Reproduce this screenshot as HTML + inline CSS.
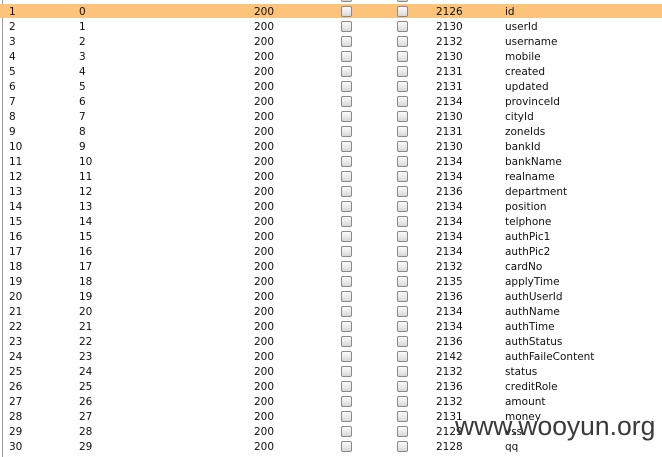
<!DOCTYPE html>
<html><head><meta charset="utf-8"><style>
html,body{margin:0;padding:0;background:#fff;width:662px;height:457px;overflow:hidden;position:relative;font-family:"DejaVu Sans","Liberation Sans",sans-serif;font-size:10.5px;color:#111}
.b{position:absolute;left:2px;top:0;width:1px;height:457px;background:#9a9a9a}
.r{position:absolute;left:0;width:662px;height:15px;line-height:15px}
.r.s{background:#fbc47a;height:14px;top:4px}
.r span{position:absolute;top:1px}
.cb{position:absolute;top:2px;width:9px;height:9px;border:1px solid #8a8a8a;border-radius:2px;background:linear-gradient(#fbfbfb,#d8d8d8)}
.wm{position:absolute;left:455px;top:411px;font-family:"Liberation Sans",sans-serif;font-size:26.5px;color:#3a3a3a;white-space:nowrap}
</style></head><body>
<div class="b"></div>
<div id="t"></div>
<script>
var n=["id","userId","username","mobile","created","updated","provinceId","cityId","zoneIds","bankId","bankName","realname","department","position","telphone","authPic1","authPic2","cardNo","applyTime","authUserId","authName","authTime","authStatus","authFaileContent","status","creditRole","amount","money","vss","qq"];
var c=[2126,2130,2132,2130,2131,2131,2134,2130,2131,2130,2134,2134,2136,2134,2134,2134,2134,2132,2135,2136,2134,2134,2136,2142,2132,2136,2132,2131,2129,2128];
var h='<div class="r" style="top:-11px"><div class="cb" style="left:341px"></div><div class="cb" style="left:397px"></div></div>';
for(var i=0;i<30;i++){var y=4+i*15;
h+='<div class="r'+(i==0?' s':'')+'" style="top:'+y+'px"><span style="left:9px">'+(i+1)+'</span><span style="left:79px">'+i+'</span><span style="left:254px">200</span><div class="cb" style="left:341px"></div><div class="cb" style="left:397px"></div><span style="left:436px">'+c[i]+'</span><span style="left:505px">'+n[i]+'</span></div>';}
document.getElementById('t').innerHTML=h;
</script>
<div class="wm">www.wooyun.org</div>
</body></html>
